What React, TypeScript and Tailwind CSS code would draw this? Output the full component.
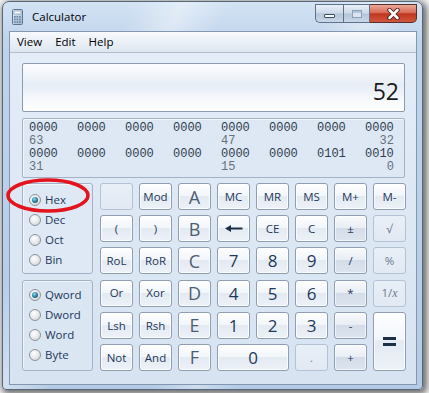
import React from "react";

type Kind = "key" | "op" | "off";

type Cell = {
  label: React.ReactNode;
  kind?: Kind;
  size?: "sm" | "hex" | "num";
  span?: string;
};

const BackArrow = () => (
  <svg width="18" height="9" viewBox="0 0 18 9">
    <line x1="4" y1="4.5" x2="17.5" y2="4.5" stroke="#1e2f45" strokeWidth="2" />
    <polygon points="0,4.5 6,1 6,8" fill="#1e2f45" />
  </svg>
);

const rows: Cell[] = [
  { label: "", kind: "off" },
  { label: "Mod" },
  { label: "A", size: "hex" },
  { label: "MC" },
  { label: "MR" },
  { label: "MS" },
  { label: "M+" },
  { label: "M-" },

  { label: "(" },
  { label: ")" },
  { label: "B", size: "hex" },
  { label: <BackArrow /> },
  { label: "CE" },
  { label: "C" },
  { label: "±", kind: "op" },
  { label: "√", kind: "off" },

  { label: "RoL" },
  { label: "RoR" },
  { label: "C", size: "hex" },
  { label: "7", size: "num" },
  { label: "8", size: "num" },
  { label: "9", size: "num" },
  { label: "/", kind: "op" },
  { label: "%", kind: "off" },

  { label: "Or" },
  { label: "Xor" },
  { label: "D", size: "hex" },
  { label: "4", size: "num" },
  { label: "5", size: "num" },
  { label: "6", size: "num" },
  { label: "*", kind: "op" },
  {
    label: (
      <span>
        1/<i className="font-['Liberation_Serif',serif] text-[12px]">x</i>
      </span>
    ),
    kind: "off",
  },

  { label: "Lsh" },
  { label: "Rsh" },
  { label: "E", size: "hex" },
  { label: "1", size: "num" },
  { label: "2", size: "num" },
  { label: "3", size: "num" },
  { label: "-", kind: "op" },
  {
    label: (
      <span className="flex flex-col gap-[3px]">
        <span className="block w-[13px] h-[3px] bg-[#1e2f45]" />
        <span className="block w-[13px] h-[3px] bg-[#1e2f45]" />
      </span>
    ),
    span: "row-span-2",
  },

  { label: "Not" },
  { label: "And" },
  { label: "F", size: "hex" },
  { label: "0", size: "num", span: "col-span-2" },
  { label: ".", kind: "off" },
  { label: "+", kind: "op" },
];

const kindClass: Record<Kind, string> = {
  key: "border-[#8f9eb3] bg-[linear-gradient(180deg,#fdfeff_0%,#f2f6fa_46%,#e4eaf2_50%,#edf2f8_100%)] shadow-[inset_0_0_0_1px_rgba(255,255,255,0.75)] text-[#1e395b]",
  op: "border-[#8f9eb3] bg-[linear-gradient(180deg,#f8fafc_0%,#e9eef5_46%,#d3dce8_50%,#dde5ef_100%)] shadow-[inset_0_0_0_1px_rgba(255,255,255,0.6)] text-[#1e395b]",
  off: "border-[#b4c2d3] bg-[linear-gradient(180deg,#e9eff7_0%,#e2e9f3_100%)] text-[#6b7a8d]",
};

const sizeClass = {
  sm: "text-[11.5px]",
  hex: "text-[18px] text-[#4f5d72]",
  num: "text-[17px]",
};

const Key = ({ cell }: { cell: Cell }) => (
  <div
    className={`flex items-center justify-center rounded-[3px] border leading-none ${
      kindClass[cell.kind ?? "key"]
    } ${sizeClass[cell.size ?? "sm"]} ${cell.span ?? ""}`}
  >
    {cell.label}
  </div>
);

const Radio = ({ label, on }: { label: string; on?: boolean }) => (
  <div className="flex items-center h-[20px]">
    <span className="w-[12px] h-[12px] rounded-full border border-[#8e949b] flex items-center justify-center bg-[radial-gradient(circle_at_40%_35%,#ffffff_0%,#e4e6e9_55%,#c3c8ce_100%)]">
      {on && (
        <span className="w-[6px] h-[6px] rounded-full bg-[radial-gradient(circle_at_40%_35%,#8ee0f2_0%,#2b7f9c_50%,#123f55_100%)]" />
      )}
    </span>
    <span className="ml-[4px] text-[11.5px] text-[#1e395b] leading-none">{label}</span>
  </div>
);

const CalcIcon = () => (
  <svg width="11" height="16" viewBox="0 0 11 16">
    <defs>
      <linearGradient id="ci" x1="0" y1="0" x2="1" y2="1">
        <stop offset="0" stopColor="#e3edf7" />
        <stop offset="1" stopColor="#9fb6ce" />
      </linearGradient>
    </defs>
    <rect x="0.5" y="0.5" width="10" height="15" rx="1" fill="url(#ci)" stroke="#5b7490" />
    <rect x="2" y="2" width="7" height="3" fill="#f7fbff" stroke="#7890a8" strokeWidth="0.6" />
    {[0, 1, 2].map((r) =>
      [0, 1, 2].map((c) => (
        <rect key={`${r}-${c}`} x={2 + c * 2.5} y={7 + r * 2.6} width="1.7" height="1.7" fill="#6d86a1" />
      ))
    )}
  </svg>
);

const bits1 = ["0000", "0000", "0000", "0000", "0000", "0000", "0000", "0000"];
const bits2 = ["0000", "0000", "0000", "0000", "0000", "0000", "0101", "0010"];

const BitRow = ({ bits }: { bits: string[] }) => (
  <div className="grid grid-cols-[repeat(7,48px)_29px] text-[#2e3d4f]">
    {bits.map((b, i) => (
      <span key={i}>{b}</span>
    ))}
  </div>
);

const PosRow = ({ a, b, c }: { a: string; b: string; c: string }) => (
  <div className="grid grid-cols-[repeat(7,48px)_29px] text-[#66717e]">
    <span>{a}</span>
    <span />
    <span />
    <span />
    <span>{b}</span>
    <span />
    <span />
    <span className="text-right">{c}</span>
  </div>
);

export default function App() {
  return (
    <div className="relative w-[429px] h-[393px] overflow-hidden bg-[#f2f3f4] font-['Open_Sans','Noto_Sans',sans-serif]">
      <div className="ml-[2px] mt-[1px] w-[421px] h-[389px] rounded-t-[7px] rounded-b-[4px] border border-[#56667b] shadow-[2px_2px_6px_2px_rgba(0,0,0,0.55)] bg-[linear-gradient(115deg,rgba(255,255,255,0)_22%,rgba(255,255,255,0.4)_30%,rgba(255,255,255,0)_38%,rgba(255,255,255,0)_55%,rgba(255,255,255,0.35)_62%,rgba(255,255,255,0)_69%),linear-gradient(180deg,#d3e3f4_0%,#bfd4eb_10%,#b4cbe5_100%)] flex flex-col">
        {/* title bar */}
        <div className="h-[29px] flex items-center">
          <div className="ml-[9px]">
            <CalcIcon />
          </div>
          <span className="ml-[9px] text-[11.5px] text-black">Calculator</span>
          <div className="ml-auto mr-[5px] self-start mt-[2px] flex">
            <div className="w-[28px] h-[19px] rounded-bl-[5px] border border-[#5e708a] border-r-0 bg-[linear-gradient(180deg,#e9f0f8_0%,#ccd9e8_48%,#b3c5da_52%,#c9d7e7_100%)] flex items-end justify-center pb-[4px]">
              <span className="block w-[11px] h-[4px] rounded-[1px] bg-white border border-[#3c4d63]" />
            </div>
            <div className="w-[27px] h-[19px] border border-[#5e708a] bg-[linear-gradient(180deg,#e9f0f8_0%,#ccd9e8_48%,#b3c5da_52%,#c9d7e7_100%)] flex items-center justify-center">
              <span className="block w-[10px] h-[8px] border border-[#8ea0b6] bg-[#dde6f0] shadow-[inset_0_2px_0_#b5c4d6]" />
            </div>
            <div className="w-[47px] h-[19px] rounded-br-[5px] border border-l-0 border-[#5a2e28] bg-[linear-gradient(180deg,#eaa999_0%,#d76a55_45%,#c0361f_52%,#d2563f_100%)] flex items-center justify-center">
              <svg width="15" height="12" viewBox="0 0 15 12">
                <path d="M3.5 2 L11.5 10 M11.5 2 L3.5 10" stroke="#4a1e18" strokeWidth="4.4" strokeLinecap="round" />
                <path d="M3.5 2 L11.5 10 M11.5 2 L3.5 10" stroke="#ffffff" strokeWidth="2.6" strokeLinecap="round" />
              </svg>
            </div>
          </div>
        </div>

        {/* client */}
        <div className="ml-[6px] w-[408px] h-[354px] border border-[#8497b0] flex flex-col bg-[linear-gradient(180deg,#e4edf8_0%,#d7e3f1_100%)]">
          <div className="h-[21px] flex items-center gap-[13px] pl-[7px] border-b border-[#b5bfcc] bg-[linear-gradient(180deg,#f8fafd_0%,#eaf0f7_50%,#dde6f0_100%)] text-[11.5px] text-black">
            <span>View</span>
            <span>Edit</span>
            <span>Help</span>
          </div>

          <div className="flex flex-col pl-[12px] pt-[10px]">
            <div className="w-[383px] h-[49px] rounded-[2px] border border-[#8d9cb1] bg-[linear-gradient(180deg,#fbfcfe_0%,#eef3f9_30%,#e6edf6_45%,#f4f7fb_70%,#ffffff_100%)] flex items-end justify-end pr-[5px] pb-[8px]">
              <span className="text-[23px] leading-none text-[#1b1b1b]">52</span>
            </div>

            <div className="mt-[6px] w-[383px] h-[60px] rounded-[2px] border border-[#a3b2c6] bg-[#dee8f4] shadow-[inset_1px_1px_0_rgba(255,255,255,0.6)] pl-[6px] pt-[3px] font-['Liberation_Mono',monospace] text-[12px] leading-[13px]">
              <BitRow bits={bits1} />
              <PosRow a="63" b="47" c="32" />
              <BitRow bits={bits2} />
              <PosRow a="31" b="15" c="0" />
            </div>

            <div className="mt-[5px] flex">
              <div className="w-[71px] flex flex-col gap-[6px]">
                <div className="h-[91px] rounded-[3px] border border-[#a3b2c6] bg-[#dfe9f5] shadow-[inset_1px_1px_0_rgba(255,255,255,0.6)] pl-[6px] pt-[6px]">
                  <Radio label="Hex" on />
                  <Radio label="Dec" />
                  <Radio label="Oct" />
                  <Radio label="Bin" />
                </div>
                <div className="h-[91px] rounded-[3px] border border-[#a3b2c6] bg-[#dbe6f3] shadow-[inset_1px_1px_0_rgba(255,255,255,0.6)] pl-[6px] pt-[4px]">
                  <Radio label="Qword" on />
                  <Radio label="Dword" />
                  <Radio label="Word" />
                  <Radio label="Byte" />
                </div>
              </div>
              <div className="ml-[7px] grid grid-cols-[repeat(8,33px)] grid-rows-[repeat(6,27px)] gap-x-[6px] gap-y-[5.2px]">
                {rows.map((c, i) => (
                  <Key key={i} cell={c} />
                ))}
              </div>
            </div>
          </div>
        </div>
      </div>

      {/* red annotation */}
      <svg className="absolute left-[5px] top-[177px]" width="86" height="37" viewBox="0 0 86 37">
        <ellipse cx="43" cy="18.5" rx="40" ry="15.5" fill="none" stroke="#e3141e" strokeWidth="3.6" />
      </svg>
    </div>
  );
}
